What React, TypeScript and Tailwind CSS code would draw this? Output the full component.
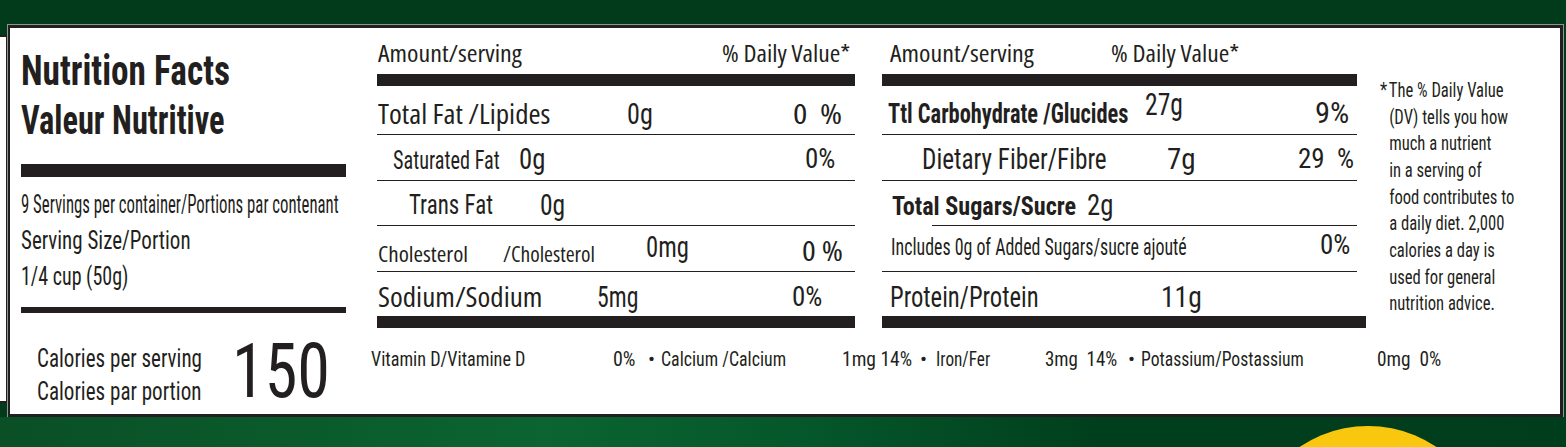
import React from 'react';

// condensed grotesk (Roboto at 75% width) and humanist (Open Sans, narrowed)
const RC = "font-['Roboto',sans-serif] font-stretch-[75%] font-[370]";
const RCB = "font-['Roboto',sans-serif] font-stretch-[75%] font-bold";
const OS = "font-['Open_Sans',sans-serif] font-stretch-[85%] font-normal";

interface TProps {
  box?: string;
  t?: string;
  children: React.ReactNode;
}

// a text slot: the outer box gives the place in the row, the inner span is the glyph run
const T: React.FC<TProps> = ({ box = '', t = '', children }) => (
  <span className={`flex shrink-0 whitespace-nowrap ${box}`}>
    <span className={`block leading-none origin-left ${t}`}>{children}</span>
  </span>
);

const Bar: React.FC<{ cls: string }> = ({ cls }) => <div className={`bg-[#231f20] ${cls}`} />;

const footnote = [
  'The % Daily Value',
  '(DV) tells you how',
  'much a nutrient',
  'in a serving of',
  'food contributes to',
  'a daily diet. 2,000',
  'calories a day is',
  'used for general',
  'nutrition advice.',
];

const LeftColumn = () => (
  <div className="ml-[11px] w-[325px] shrink-0 flex flex-col">
    <T box="mt-[22px]" t={`${RCB} text-[42px] scale-x-[0.84]`}>Nutrition Facts</T>
    <T box="mt-[9px]" t={`${RCB} text-[40px] scale-x-[0.81]`}>Valeur Nutritive</T>
    <Bar cls="mt-[23px] h-[13px] w-[325px]" />
    <T box="mt-[15px]" t={`${RC} text-[25px] scale-x-[0.67]`}>9 Servings per container/Portions par contenant</T>
    <T box="mt-[11px]" t={`${RC} text-[25px] scale-x-[0.84]`}>Serving Size/Portion</T>
    <T box="mt-[11px]" t={`${RC} text-[25px] scale-x-[0.8]`}>1/4 cup (50g)</T>
    <Bar cls="mt-[18px] h-[6px] w-[325px]" />
    <div className="mt-[20px] flex items-start">
      <div className="ml-[16px] w-[195px] mt-[12px] flex flex-col">
        <T t={`${RC} text-[26px] scale-x-[0.81]`}>Calories per serving</T>
        <T box="mt-[7px]" t={`${RC} text-[26px] scale-x-[0.81]`}>Calories par portion</T>
      </div>
      <T t="font-['Roboto',sans-serif] font-stretch-[75%] font-normal text-[76px] scale-x-[0.87]">150</T>
    </div>
  </div>
);

const Row: React.FC<{ h: string; line?: boolean; children: React.ReactNode }> = ({ h, line = true, children }) => (
  <div className={`flex items-end ${h} ${line ? 'border-b border-[#231f20]' : ''}`}>{children}</div>
);

const MiddleColumn = () => (
  <div className="ml-[6px] w-[478px] shrink-0 flex flex-col">
    <div className="flex items-end h-[46px]">
      <T box="ml-[1px] w-[144px] mb-[9px]" t={`${OS} text-[23px] scale-x-[1.13]`}>Amount/serving</T>
      <T box="ml-[200px] w-[128px] mb-[9px]" t={`${OS} text-[23px] scale-x-[1.11]`}>% Daily Value*</T>
    </div>
    <Bar cls="h-[12px]" />
    <Row h="h-[49px]">
      <T box="ml-[1px] w-[172px] mb-[7px]" t={`${OS} text-[27px] scale-x-[1.08]`}>Total Fat /Lipides</T>
      <T box="ml-[77px] w-[25px] mb-[5px]" t={`${RC} text-[29px] scale-x-[0.9]`}>0g</T>
      <T box="ml-[141px] w-[49px] mb-[7px]" t={`${OS} text-[27px] scale-x-[1.25]`}>0&nbsp;&nbsp;%</T>
    </Row>
    <Row h="h-[46px]">
      <T box="ml-[16px] w-[106px] mb-[7px]" t={`${RC} text-[25px] scale-x-[0.81]`}>Saturated Fat</T>
      <T box="ml-[20px] w-[25px] mb-[6px]" t={`${RC} text-[29px] scale-x-[0.92]`}>0g</T>
      <T box="ml-[261px] w-[32px] mb-[7px]" t={`${RC} text-[27px]`}>0%</T>
    </Row>
    <Row h="h-[45px]">
      <T box="ml-[32px] w-[84px] mb-[6px]" t={`${RC} text-[27px] scale-x-[0.85]`}>Trans Fat</T>
      <T box="ml-[47px] w-[23px] mb-[5px]" t={`${RC} text-[29px] scale-x-[0.88]`}>0g</T>
    </Row>
    <Row h="h-[46px]">
      <T box="ml-[1px] w-[89px] mb-[7px]" t={`${OS} text-[22px] scale-x-[1.05]`}>Cholesterol</T>
      <T box="ml-[36px] w-[92px] mb-[7px]" t={`${OS} text-[22px] scale-x-[0.98]`}>/Cholesterol</T>
      <T box="ml-[51px] w-[42px] mb-[9px]" t={`${RC} text-[30px] scale-x-[0.82]`}>0mg</T>
      <T box="ml-[114px] w-[40px] mb-[7px]" t={`${OS} text-[27px] scale-x-[1.2]`}>0&nbsp;%</T>
    </Row>
    <Row h="h-[44px]" line={false}>
      <T box="ml-[1px] w-[164px] mb-[6px]" t={`${OS} text-[28px] scale-x-[1.04]`}>Sodium/Sodium</T>
      <T box="ml-[55px] w-[42px] mb-[4px]" t={`${RC} text-[29px] scale-x-[0.82]`}>5mg</T>
      <T box="ml-[153px] w-[31px] mb-[5px]" t={`${RC} text-[27px]`}>0%</T>
    </Row>
    <Bar cls="h-[12px]" />
  </div>
);

const RightColumn = () => (
  <div className="ml-[27px] w-[475px] shrink-0 flex flex-col">
    <div className="flex items-end h-[46px]">
      <T box="ml-[8px] w-[144px] mb-[9px]" t={`${OS} text-[23px] scale-x-[1.13]`}>Amount/serving</T>
      <T box="ml-[77px] w-[128px] mb-[9px]" t={`${OS} text-[23px] scale-x-[1.11]`}>% Daily Value*</T>
    </div>
    <Bar cls="h-[12px]" />
    <Row h="h-[49px]">
      <T box="ml-[6px] w-[239px] mb-[6px]" t={`${RCB} text-[27px] scale-x-[0.83]`}>Ttl Carbohydrate /Glucides</T>
      <T box="ml-[18px] w-[38px] mb-[14px]" t={`${RC} text-[32px] scale-x-[0.8]`}>27g</T>
      <T box="ml-[132px] w-[34px] mb-[6px]" t={`${RC} text-[29px] scale-x-[1.05]`}>9%</T>
    </Row>
    <Row h="h-[46px]">
      <T box="ml-[40px] w-[185px] mb-[6px]" t={`${RC} text-[29px] scale-x-[0.87]`}>Dietary Fiber/Fibre</T>
      <T box="ml-[60px] w-[29px] mb-[6px]" t={`${RC} text-[29px]`}>7g</T>
      <T box="ml-[102px] w-[58px] mb-[7px]" t={`${RC} text-[27px]`}>29&nbsp;&nbsp;%</T>
    </Row>
    <div className="flex flex-col h-[45px]">
      <div className="flex items-end flex-1">
        <T box="ml-[10px] w-[179px] mb-[6px]" t={`${RCB} text-[26px] scale-x-[0.93]`}>Total Sugars/Sucre</T>
        <T box="ml-[16px] w-[25px] mb-[5px]" t={`${RC} text-[29px] scale-x-[0.92]`}>2g</T>
      </div>
      <div className="ml-[50px] h-px bg-[#231f20]" />
    </div>
    <Row h="h-[46px]">
      <T box="ml-[9px] w-[296px] mb-[12px]" t={`${RC} text-[24px] scale-x-[0.745]`}>Includes 0g of Added Sugars/sucre ajouté</T>
      <T box="ml-[133px] w-[32px] mb-[12px]" t={`${RC} text-[27px]`}>0%</T>
    </Row>
    <Row h="h-[44px]" line={false}>
      <T box="ml-[8px] w-[148px] mb-[4px]" t={`${RC} text-[29px] scale-x-[0.85]`}>Protein/Protein</T>
      <T box="ml-[123px] w-[40px] mb-[4px]" t={`${RC} text-[29px] scale-x-[0.95]`}>11g</T>
    </Row>
    <Bar cls="h-[12px] w-[484px]" />
  </div>
);

const Footnote = () => (
  <div className={`ml-[23px] mt-[49px] ${RC} text-[20px] leading-[26.67px] whitespace-nowrap origin-top-left scale-x-[0.83]`}>
    {footnote.map((line, i) => (
      <div key={line} className={i === 0 ? '' : 'ml-[11px]'}>
        {i === 0 ? <span className="mr-[2px]">*</span> : null}
        {line}
      </div>
    ))}
  </div>
);

const Vitamins = () => (
  <div className="mt-[21px] flex items-end">
    <T box="w-[154px]" t={`${RC} text-[21px] scale-x-[0.865]`}>Vitamin D/Vitamine D</T>
    <T box="ml-[88px] w-[24px]" t={`${RC} text-[21px] scale-x-[0.95]`}>0%</T>
    <T box="ml-[11px] w-[6px]" t={`${RC} text-[21px]`}>•</T>
    <T box="ml-[7px] w-[125px]" t={`${RC} text-[21px] scale-x-[0.85]`}>Calcium /Calcium</T>
    <T box="ml-[56px] w-[69px]" t={`${RC} text-[21px] scale-x-[0.93]`}>1mg 14%</T>
    <T box="ml-[9px] w-[6px]" t={`${RC} text-[21px]`}>•</T>
    <T box="ml-[10px] w-[54px]" t={`${RC} text-[21px] scale-x-[0.82]`}>Iron/Fer</T>
    <T box="ml-[55px] w-[72px]" t={`${RC} text-[21px] scale-x-[0.9]`}>3mg&nbsp;&nbsp;14%</T>
    <T box="ml-[11px] w-[6px]" t={`${RC} text-[21px]`}>•</T>
    <T box="ml-[7px] w-[163px]" t={`${RC} text-[21px] scale-x-[0.84]`}>Potassium/Postassium</T>
    <T box="ml-[73px] w-[63px]" t={`${RC} text-[21px] scale-x-[0.92]`}>0mg&nbsp;&nbsp;0%</T>
  </div>
);

export default function App() {
  return (
    <div className="relative w-[1566px] h-[447px] overflow-hidden bg-[#013b1b] text-[#231f20] flex flex-col">
      <div className="pt-[25px] flex items-start">
        {/* edge of the neighbouring label */}
        <div className="mt-[10px] w-[8px] h-[368px] shrink-0 bg-white border-y-2 border-r-2 border-[#231f20]" />
        <div className="w-[1555px] h-[392px] shrink-0 bg-white border-[3px] border-l-2 border-[#231f20] ring-1 ring-[#8d978d] flex items-start">
          <LeftColumn />
          <div className="ml-[25px] flex flex-col">
            <div className="flex items-start">
              <MiddleColumn />
              <RightColumn />
              <Footnote />
            </div>
            <Vitamins />
          </div>
        </div>
      </div>
      <div className="flex-1 bg-[linear-gradient(90deg,#0a4f26_0%,#0b6431_35%,#05562a_52%,#003f1d_70%,#003d1c_100%)]" />
      <div className="absolute left-[1246px] top-[426px] w-[244px] h-[244px] rounded-full bg-[#f9c80e]" />
    </div>
  );
}
